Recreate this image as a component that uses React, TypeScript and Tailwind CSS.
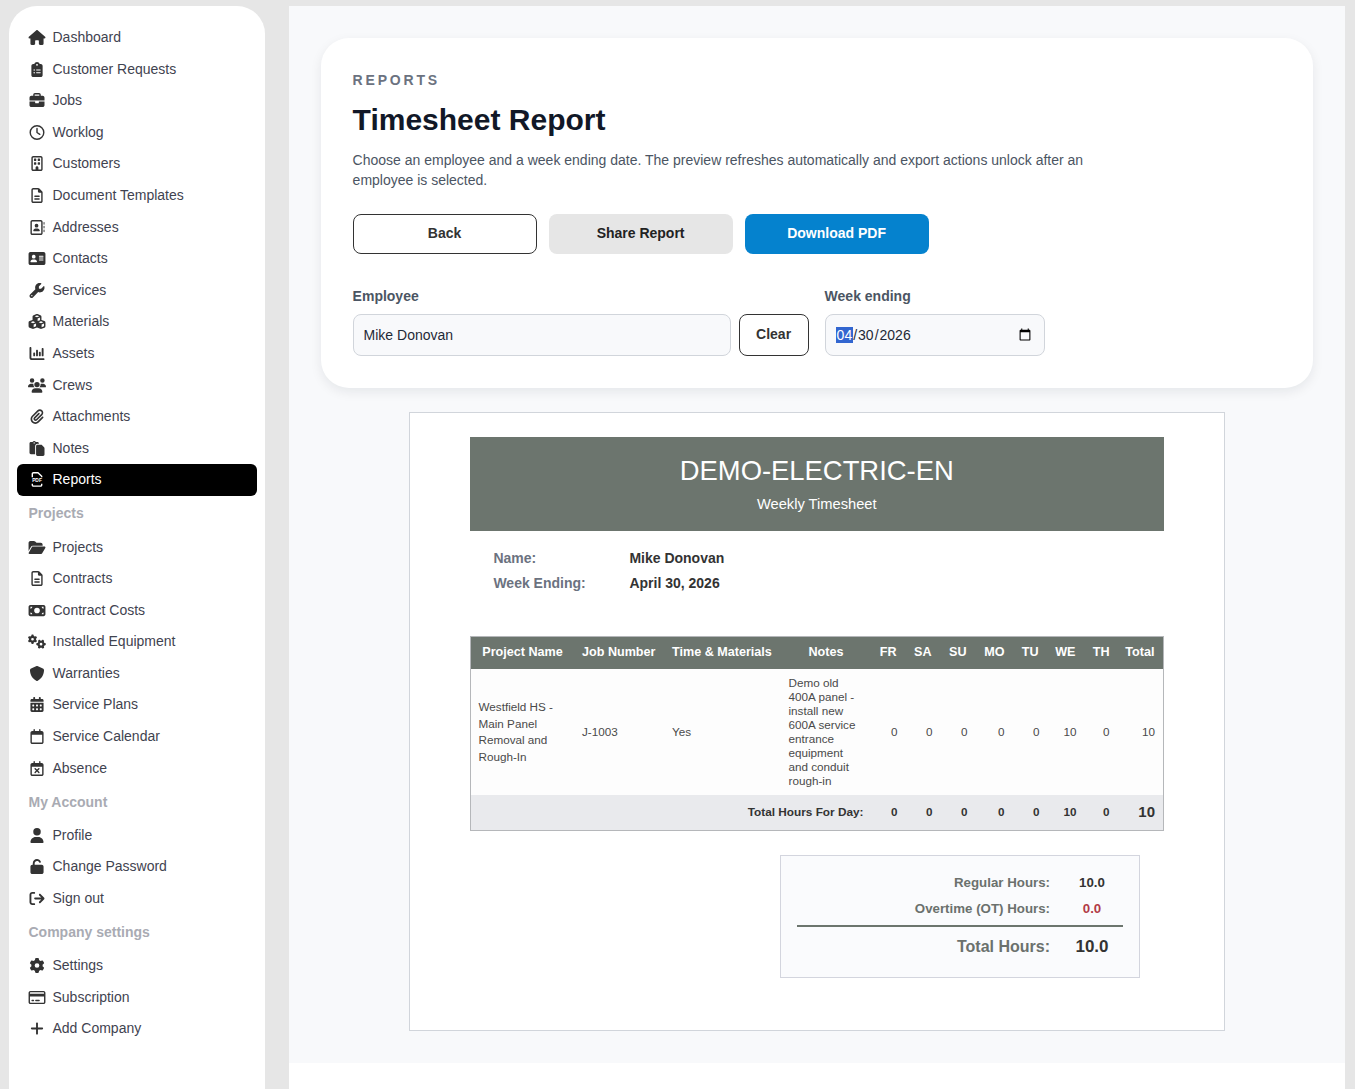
import type { IconType } from 'react-icons';
import {
  FaAddressCard,
  FaArrowRightFromBracket,
  FaBriefcase,
  FaCalendarDays,
  FaChartColumn,
  FaClipboardList,
  FaCubes,
  FaFolderOpen,
  FaGear,
  FaGears,
  FaHouse,
  FaMoneyBill,
  FaPaperclip,
  FaPaste,
  FaPlus,
  FaRegAddressBook,
  FaRegBuilding,
  FaRegCalendar,
  FaRegCalendarXmark,
  FaRegClock,
  FaRegCreditCard,
  FaRegFileLines,
  FaShield,
  FaUnlock,
  FaUser,
  FaUsers,
  FaWrench,
} from 'react-icons/fa6';

type NavItem = { label: string; icon: IconType; active?: boolean };

// file outline split around a small PDF label, no package has this exact one
const PdfFileIcon: IconType = ({ className }) => (
  <svg viewBox="0 0 18 16" fill="none" className={className}>
    <path
      d="M4 5.5V2a1.2 1.2 0 0 1 1.2-1.2H10L14 4.6v.9M4 12.6v1.3a1.2 1.2 0 0 0 1.2 1.2h7.6a1.2 1.2 0 0 0 1.2-1.2v-1.3"
      stroke="currentColor"
      strokeWidth="1.5"
    />
    <text
      x="9"
      y="11"
      textAnchor="middle"
      fill="currentColor"
      fontSize="5.2"
      fontWeight="700"
    >
      PDF
    </text>
  </svg>
);

const mainNav: NavItem[] = [
  { label: 'Dashboard', icon: FaHouse },
  { label: 'Customer Requests', icon: FaClipboardList },
  { label: 'Jobs', icon: FaBriefcase },
  { label: 'Worklog', icon: FaRegClock },
  { label: 'Customers', icon: FaRegBuilding },
  { label: 'Document Templates', icon: FaRegFileLines },
  { label: 'Addresses', icon: FaRegAddressBook },
  { label: 'Contacts', icon: FaAddressCard },
  { label: 'Services', icon: FaWrench },
  { label: 'Materials', icon: FaCubes },
  { label: 'Assets', icon: FaChartColumn },
  { label: 'Crews', icon: FaUsers },
  { label: 'Attachments', icon: FaPaperclip },
  { label: 'Notes', icon: FaPaste },
  { label: 'Reports', icon: PdfFileIcon, active: true },
];

const projectNav: NavItem[] = [
  { label: 'Projects', icon: FaFolderOpen },
  { label: 'Contracts', icon: FaRegFileLines },
  { label: 'Contract Costs', icon: FaMoneyBill },
  { label: 'Installed Equipment', icon: FaGears },
  { label: 'Warranties', icon: FaShield },
  { label: 'Service Plans', icon: FaCalendarDays },
  { label: 'Service Calendar', icon: FaRegCalendar },
  { label: 'Absence', icon: FaRegCalendarXmark },
];

const accountNav: NavItem[] = [
  { label: 'Profile', icon: FaUser },
  { label: 'Change Password', icon: FaUnlock },
  { label: 'Sign out', icon: FaArrowRightFromBracket },
];

const companyNav: NavItem[] = [
  { label: 'Settings', icon: FaGear },
  { label: 'Subscription', icon: FaRegCreditCard },
  { label: 'Add Company', icon: FaPlus },
];

const days = [
  { label: 'FR', value: 0, width: 'w-[34px]', pad: 'pr-[9px]' },
  { label: 'SA', value: 0, width: 'w-[35px]', pad: 'pr-[9px]' },
  { label: 'SU', value: 0, width: 'w-[35px]', pad: 'pr-[9px]' },
  { label: 'MO', value: 0, width: 'w-[37px]', pad: 'pr-2' },
  { label: 'TU', value: 0, width: 'w-[35px]', pad: 'pr-[9px]' },
  { label: 'WE', value: 10, width: 'w-[37px]', pad: 'pr-[9px]' },
  { label: 'TH', value: 0, width: 'w-[33px]', pad: 'pr-2' },
];

const NavRow = ({ item }: { item: NavItem }) => {
  const Icon = item.icon;
  return (
    <a
      className={`flex h-[31.6px] items-center rounded-md pl-[10px] text-[14px] ${
        item.active ? 'bg-black text-white' : 'text-[#3f4350]'
      }`}
    >
      <span className="mr-[5.5px] flex w-[20px] shrink-0 justify-center">
        <Icon
          className={`h-[15px] w-[18px] ${item.active ? 'text-white' : 'text-[#333]'}`}
        />
      </span>
      {item.label}
    </a>
  );
};

const NavHeading = ({ label }: { label: string }) => (
  <div className="flex h-[35.5px] items-center pt-[0.6px] pl-[11.5px] text-[14px] font-bold text-[#a9abb3]">
    {label}
  </div>
);

const Sidebar = () => (
  <aside className="mt-[6px] ml-[9px] w-[256px] shrink-0 rounded-t-[28px] bg-white px-2 pt-[15.8px]">
    {mainNav.map((item) => (
      <NavRow key={item.label} item={item} />
    ))}
    <NavHeading label="Projects" />
    {projectNav.map((item) => (
      <NavRow key={item.label} item={item} />
    ))}
    <NavHeading label="My Account" />
    {accountNav.map((item) => (
      <NavRow key={item.label} item={item} />
    ))}
    <NavHeading label="Company settings" />
    {companyNav.map((item) => (
      <NavRow key={item.label} item={item} />
    ))}
  </aside>
);

const FilterCard = () => (
  <section className="rounded-[28px] bg-white py-8 pr-8 pl-[31.6px] shadow-[0_4px_12px_rgba(15,23,42,0.08)]">
    <p className="text-[14px] leading-5 font-bold tracking-[0.2em] text-[#6b7280]">
      REPORTS
    </p>
    <h1 className="mt-[10px] text-[30px] leading-[40px] font-bold text-[#111827]">
      Timesheet Report
    </h1>
    <p className="mt-[10px] w-[760px] text-[14px] leading-[20px] text-[#4b5563]">
      Choose an employee and a week ending date. The preview refreshes
      automatically and export actions unlock after an employee is selected.
    </p>
    <div className="mt-[24px] flex gap-3">
      <button className="h-10 w-[184px] rounded-lg border border-[#333] bg-white pb-[2px] text-[14px] font-bold text-[#333]">
        Back
      </button>
      <button className="h-10 w-[184px] rounded-lg bg-[#e6e6e6] pb-[2px] text-[14px] font-bold text-[#222]">
        Share Report
      </button>
      <button className="h-10 w-[184px] rounded-lg bg-[#0582ce] pb-[2px] text-[14px] font-bold text-white">
        Download PDF
      </button>
    </div>
    <div className="mt-[32px] flex">
      <div className="w-[456px]">
        <div className="text-[14px] leading-5 font-bold text-[#4b5563]">
          Employee
        </div>
        <div className="mt-2 flex gap-2">
          <input
            readOnly
            value="Mike Donovan"
            className="h-[42px] w-[378px] rounded-lg border border-[#d1d5db] bg-[#f8f9fb] px-[10px] text-[14px] text-[#1f2937] outline-none"
          />
          <button className="h-[42px] w-[70px] rounded-lg border border-[#333] bg-white pb-[2px] text-[14px] font-bold text-[#333]">
            Clear
          </button>
        </div>
      </div>
      <div className="ml-4 w-[220px]">
        <div className="text-[14px] leading-5 font-bold text-[#4b5563]">
          Week ending
        </div>
        <input
          type="date"
          autoFocus
          defaultValue="2026-04-30"
          className="mt-2 h-[42px] w-[220px] rounded-lg border border-[#d1d5db] bg-[#f8f9fb] px-[10px] text-[14px] text-[#1f2937] outline-none"
        />
      </div>
    </div>
  </section>
);

const HoursTable = () => (
  <table className="mt-[40px] w-[694px] table-fixed border-collapse border border-[#b5b7ba] text-[11.7px] text-[#4a4a4a]">
    <colgroup>
      <col className="w-[103.5px]" />
      <col className="w-[90px]" />
      <col className="w-[116.5px]" />
      <col className="w-[91px]" />
      {days.map((day) => (
        <col key={day.label} className={day.width} />
      ))}
      <col />
    </colgroup>
    <thead>
      <tr className="h-[32px] bg-[#6c756e] text-[12.6px] font-bold text-white">
        <th className="whitespace-nowrap px-2 text-center">Project Name</th>
        <th className="whitespace-nowrap px-2 text-left">Job Number</th>
        <th className="whitespace-nowrap px-2 text-left">Time &amp; Materials</th>
        <th className="px-2 text-center">Notes</th>
        {days.map((day) => (
          <th key={day.label} className={`text-right ${day.pad}`}>
            {day.label}
          </th>
        ))}
        <th className="pr-[8.5px] text-right">Total</th>
      </tr>
    </thead>
    <tbody>
      <tr className="bg-[#fdfdfd]">
        <td className="pt-[1.6px] pr-2 pl-[7.5px] leading-[16.7px]">
          Westfield HS - Main Panel Removal and Rough-In
        </td>
        <td className="px-2">J-1003</td>
        <td className="px-2">Yes</td>
        <td className="px-2 py-[7px] leading-[14px]">
          Demo old 400A panel - install new 600A service entrance equipment and
          conduit rough-in
        </td>
        {days.map((day) => (
          <td key={day.label} className="px-2 text-right">
            {day.value}
          </td>
        ))}
        <td className="px-2 text-right">10</td>
      </tr>
      <tr className="h-[36px] bg-[#e9eaed] font-bold text-[#333]">
        <td colSpan={4} className="px-2 pt-[1px] text-right text-[11.8px]">
          Total Hours For Day:
        </td>
        {days.map((day) => (
          <td key={day.label} className="px-2 text-right">
            {day.value}
          </td>
        ))}
        <td className="px-2 text-right text-[15px]">10</td>
      </tr>
    </tbody>
  </table>
);

const SummaryBox = () => (
  <div className="mt-6 ml-[310px] w-[360px] border border-[#d3d5de] bg-[#fafbfd] px-4 pt-[14px] pb-[18px] font-bold">
    <div className="flex h-[25px] items-center text-[13.3px]">
      <span className="w-[253px] shrink-0 text-right text-[#6b716d]">
        Regular Hours:
      </span>
      <span className="w-[73px] shrink-0 pl-[11px] text-center text-[#333]">
        10.0
      </span>
    </div>
    <div className="flex h-[26px] items-center pt-[1px] text-[13.3px]">
      <span className="w-[253px] shrink-0 text-right text-[#6b716d]">
        Overtime (OT) Hours:
      </span>
      <span className="w-[73px] shrink-0 pl-[11px] text-center text-[#b23b47]">
        0.0
      </span>
    </div>
    <div className="mt-[4px] h-[2px] bg-[#6c756e]" />
    <div className="mt-[8px] flex h-[24px] items-center">
      <span className="w-[253px] shrink-0 text-right text-[16px] text-[#6b716d]">
        Total Hours:
      </span>
      <span className="w-[73px] shrink-0 pl-[11px] text-center text-[17px] text-[#333]">
        10.0
      </span>
    </div>
  </div>
);

const ReportSheet = () => (
  <section className="mx-auto mt-6 h-[619px] w-[816px] border border-[#d1d5db] bg-white px-[60px] pt-6">
    <header className="flex h-[94px] flex-col items-center bg-[#6c756e] pt-[18px] text-white">
      <h2 className="pr-[0.5px] text-[27.4px] leading-[32px]">DEMO-ELECTRIC-EN</h2>
      <p className="mt-[7px] pr-[0.5px] text-[14.7px] leading-5">Weekly Timesheet</p>
    </header>
    <dl className="mt-[15px] ml-[23.4px] text-[14px] font-bold">
      <div className="flex h-[25px] items-center">
        <dt className="w-[136px] text-[#6b7280]">Name:</dt>
        <dd className="text-[#333]">Mike Donovan</dd>
      </div>
      <div className="flex h-[25px] items-center">
        <dt className="w-[136px] text-[#6b7280]">Week Ending:</dt>
        <dd className="text-[#333]">April 30, 2026</dd>
      </div>
    </dl>
    <HoursTable />
    <SummaryBox />
  </section>
);

export default function App() {
  return (
    <div
      className="flex h-[1089px] overflow-hidden bg-[#e6e6e6]"
      style={{ fontFamily: '"Liberation Sans", Arial, sans-serif' }}
    >
      <Sidebar />
      <main className="mt-[6px] ml-6 w-[1056px] shrink-0 bg-white">
        <div className="h-[1057px] bg-[#f8f9fb] px-8 pt-8">
          <FilterCard />
          <ReportSheet />
        </div>
      </main>
    </div>
  );
}
